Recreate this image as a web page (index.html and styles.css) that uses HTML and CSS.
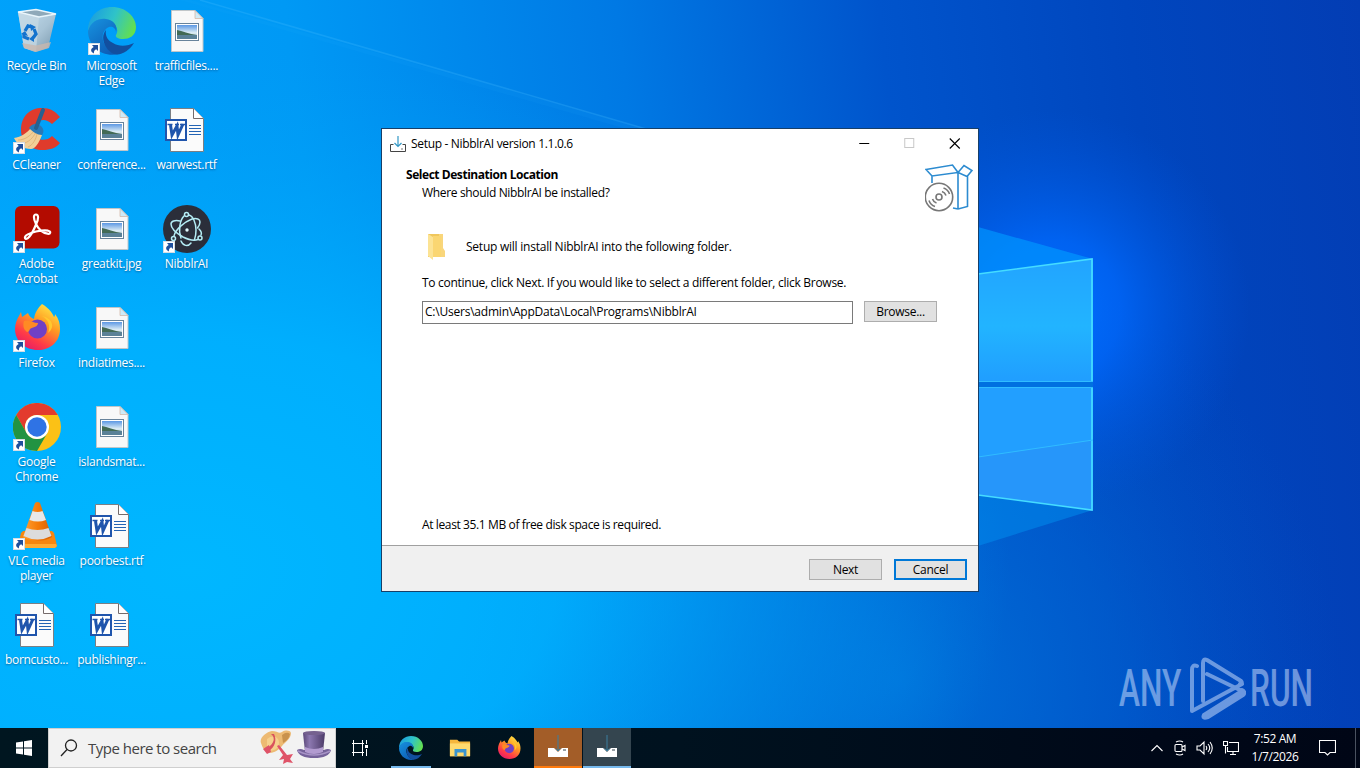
FILE: index.html
```
<!DOCTYPE html>
<html lang="en">
<head>
  <meta charset="utf-8">
  <title>Desktop</title>
  <link rel="stylesheet" href="styles.css">
</head>
<body>
  <!-- Shared icons -->
  <svg class="defs" aria-hidden="true">
    <defs>
      <linearGradient id="edgeTop" x1="0" y1="0.3" x2="1" y2="0.6"><stop offset="0" stop-color="#1a9de0"/><stop offset=".5" stop-color="#2fc3c8"/><stop offset="1" stop-color="#65e04c"/></linearGradient>
      <linearGradient id="edgeLeft" x1="0" y1="0" x2=".7" y2="1"><stop offset="0" stop-color="#1793e0"/><stop offset="1" stop-color="#0d5cb5"/></linearGradient>
      <linearGradient id="sky" x1="0" y1="0" x2="0" y2="1"><stop offset="0" stop-color="#5c98e4"/><stop offset=".55" stop-color="#dcecf4"/><stop offset="1" stop-color="#a9c4d0"/></linearGradient>
      <linearGradient id="fox" x1=".85" y1="0" x2=".25" y2="1"><stop offset="0" stop-color="#fff04a"/><stop offset=".4" stop-color="#ff9a22"/><stop offset=".75" stop-color="#ff3b47"/><stop offset="1" stop-color="#e41a6a"/></linearGradient>
      <linearGradient id="bin" x1="0" y1="0" x2="1" y2="1"><stop offset="0" stop-color="#c5dff0"/><stop offset=".55" stop-color="#a8c3d5"/><stop offset="1" stop-color="#7695aa"/></linearGradient>
      <linearGradient id="cone" x1="0" x2="1"><stop offset="0" stop-color="#ffa033"/><stop offset=".5" stop-color="#f57c0a"/><stop offset="1" stop-color="#d85e00"/></linearGradient>
      <linearGradient id="hat" x1="0" x2="1"><stop offset="0" stop-color="#5b4979"/><stop offset=".3" stop-color="#8c78b0"/><stop offset="1" stop-color="#4c3b68"/></linearGradient>
    </defs>
    <symbol id="i-arrow" viewBox="0 0 12 12">
      <rect width="12" height="12" fill="#fff"/>
      <rect x=".5" y=".5" width="11" height="11" fill="none" stroke="#d5dde5"/>
      <path d="M4 2h6v6L8.200 6.300C6.300 7.300 5.700 8.700 6 10.500 2.200 9 2.300 5.500 5.700 4z" fill="#1f4f9c"/>
    </symbol>
    <symbol id="i-bin" viewBox="0 0 48 48">
      <path d="M5 5l6 36 11 4 13-4 8-34-17 3z" fill="url(#bin)"/>
      <path d="M5 5l21 5-3 34.500L11 41z" fill="#c5d8e3" opacity=".75"/>
      <path d="M5 5l18-2.500L43 7 26 10z" fill="#8fa9b9" stroke="#e9f5fb" stroke-width="1.300"/>
      <path d="M9 36l14 2.500L38 35l-2 6-13 4-12-4z" fill="#c9b8ae" opacity=".8"/>
      <g fill="none" stroke="#1373ce" stroke-width="3.300"><path d="M12 24l3-5 4 1"/><path d="M21 22l2 5-3 4"/><path d="M16 32l-5-2v-3"/></g>
      <path d="M17 17l6 3-5 4zM21 35l-5-3 5-4zM8 27l4-3 3 5z" fill="#1373ce"/>
    </symbol>
    <symbol id="i-edge" viewBox="0 0 48 48">
      <path d="M0 24C0 8 12 0 24 0c14 0 24 10 24 20 0 9-7 12-13 12-5 0-8-2-7-4 2-3 2-7-2-11C20 11 7 11 0 24z" fill="url(#edgeTop)"/>
      <path d="M0 24C3 14 11 11 18 12c8 1 12 7 10 13 0-4-4-6-7-5-7 3-8 12-4 18 4 6 9 9 14 9C14 51 0 39 0 24z" fill="url(#edgeLeft)"/>
      <path d="M18 23c-6 7-2 19 8 24 7 2 15-3 20-11-6 3-15 4-21 0-6-3-8-8-7-13z" fill="#124f9f"/>
    </symbol>
    <symbol id="i-image" viewBox="0 0 48 48">
      <path d="M8.500 3.500H32l8 8V44.500H8.500z" fill="#f8f8f8" stroke="#c0c6c9"/>
      <path d="M32 3.500V11.500h8z" fill="#cfeaf6" stroke="#d3b9a8" stroke-width=".8"/>
      <rect x="12.500" y="16.500" width="23" height="17" fill="#fff" stroke="#68839b"/>
      <rect x="14" y="18" width="20" height="14" fill="url(#sky)"/>
      <path d="M14 23c5 1 12 4 20 5H14z" fill="#426a55"/>
      <path d="M14 28h20v4H14z" fill="#5a8197"/>
    </symbol>
    <symbol id="i-word" viewBox="0 0 48 48">
      <path d="M7.500 2.500h23l10 10v33h-33z" fill="#fbfbfb" stroke="#7b7f84"/>
      <path d="M30.500 2.500v10h10" fill="#fff" stroke="#756b6b"/>
      <path d="M26 19.500h12M26 22.500h12M26 25.500h12M26 28.500h12" stroke="#2464b4"/>
      <rect x="3" y="14" width="20" height="20" fill="#fff" stroke="#2055ac" stroke-width="2"/>
      <path d="M7.500 19l1.500 10 5-9 1 9 5-11" fill="none" stroke="#2055ac" stroke-width="3"/>
      <path d="M4.500 18.500h5M12 18.500h4M17 18.500h5" stroke="#2055ac" stroke-width="1.500"/>
    </symbol>
    <symbol id="i-ccleaner" viewBox="0 0 48 48">
      <path d="M47 11l-8 7C31 10 21 15 21 24c0 10 11 13 18 6l8 7c-4 5-10 7-17 7-13 0-22-8-22-20C8 10 17 2 29 2c8 0 13 3 18 9z" fill="#df3b2c"/>
      <path d="M1 32c7-1 13-5 17-10l11 7c-3 8-7 14-11 14C10 43 4 38 1 32z" fill="#f2cf98"/>
      <path d="M5 34c7 0 12-4 16-9M9 38c7-2 11-6 14-12M15 41c5-2 8-8 9-13" fill="none" stroke="#e0b67a"/>
      <path d="M16 22c3-5 8-5 12-2 3 3 3 6 1 9-5 0-9-3-13-7z" fill="#2879b8"/>
      <path d="M23 22l7-18" stroke="#27618f" stroke-width="4" stroke-linecap="round"/>
    </symbol>
    <symbol id="i-acrobat" viewBox="0 0 48 48">
      <rect x="2" y="1" width="44.500" height="42.500" rx="6" fill="#b30b00"/>
      <path d="M23 19c-3-6-2.500-9.500 0-9.500s3 4 0 10c-2 5-4 9-6.500 12-2.500 3-5 3-4.500.500.500-2 5-4 11-5.500 5-1 9-1.300 12-.8 3.500.800 2.500 3.500-.500 3-4-.500-9-4-11.500-9.700z" fill="none" stroke="#fff" stroke-width="2.200"/>
    </symbol>
    <symbol id="i-electron" viewBox="0 0 48 48">
      <circle cx="24" cy="24" r="24" fill="#2b2e3a"/>
      <g fill="none" stroke="#b5edf5" stroke-width="1.500" stroke-linecap="round">
        <path d="M26 10c4 1 7 8 7 15 0 4-.500 7-1.500 9.500"/>
        <path d="M21 11c-4 4-6 14-3 22"/>
        <path d="M18 36c2 5 7 6 10 2"/>
        <path d="M11 31c1-6 10-14 18-17 5-1 8 0 8 3 0 2-1 4-2.500 6"/>
        <path d="M17 16c-5-1-9 0-9 3 0 4 5 9 12 13 6 3 11 4 15 2.500"/>
        <path d="M38 30c1-2 0-4-2-6"/>
        <circle cx="23.500" cy="9.500" r="2"/><circle cx="10.500" cy="33.500" r="2"/><circle cx="37" cy="33" r="2"/>
      </g>
      <circle cx="24" cy="25" r="1.700" fill="#dffaff"/>
    </symbol>
    <symbol id="i-firefox" viewBox="0 0 48 48">
      <path d="M29 0c8 5 11 10 12 13 1-1 1-2 1-3 4 5 5 10 5 15 0 13-10 21-22 21C12 46 2 37 2 25c0-5 2-10 4-13l2-4 1 5 6-4c1 3 3 5 6 6 1-7 4-11 8-15z" fill="url(#fox)"/>
      <circle cx="24.500" cy="25" r="9.500" fill="#7040c5"/>
      <path d="M11 17c5-2 9 2 14 2 0 4-5 4-8 6-1 3-3 4-4 2-3-2-3-7-2-10z" fill="#ff8a24"/>
      <path d="M29 12c6 3 9 10 6 17 8-6 4-15-6-17z" fill="#ffc82d"/>
    </symbol>
    <symbol id="i-chrome" viewBox="0 0 48 48">
      <circle cx="24" cy="24" r="24" fill="#fbc116"/>
      <path d="M3.200 12A24 24 0 0 1 44.800 12H24a12 12 0 0 0-10.400 18z" fill="#e33b2e"/>
      <path d="M3.200 12A24 24 0 0 0 24 48l10.400-18a12 12 0 0 1-20.800 0z" fill="#229342"/>
      <circle cx="24" cy="24" r="12" fill="#fff"/><circle cx="24" cy="24" r="9.700" fill="#2f73e5"/>
    </symbol>
    <symbol id="i-vlc" viewBox="0 0 48 48">
      <path d="M8 31l2-2h29l2 2 3 13-2 2H7l-2-2z" fill="#f6860f"/>
      <path d="M6 42h37l1 2-2 2H7l-2-2z" fill="#ffab32"/>
      <path d="M22 1q2.500-2 5 0l12 34q-14 8-29 0z" fill="url(#cone)"/>
      <path d="M19.500 9q5 2 10 0l3.500 9q-8 3-16.500 0z" fill="#e8e8e8"/>
      <path d="M13.500 26q11 4 22 0l3 8q-14 7-28 0z" fill="#dcdcdc"/>
    </symbol>
    <symbol id="i-setup" viewBox="0 0 24 24">
      <path d="M2 13h6l4 4 4-4h6v9H2z" fill="#fff"/><path d="M17 15h3" stroke="#30404a"/>
      <path d="M12 0v16M9.500 13.500L12 16l2.500-2.500" fill="none" stroke="#3b7f9f"/>
    </symbol>
  </svg>

  <div class="desktop">
    <svg class="wallpaper" viewBox="0 0 1360 768" aria-hidden="true">
      <defs>
        <linearGradient id="base" x1="0" y1="160" x2="1360" y2="0" gradientUnits="userSpaceOnUse">
          <stop offset="0" stop-color="#00a2fb"/><stop offset=".22" stop-color="#0099f5"/><stop offset=".46" stop-color="#0079e4"/><stop offset=".65" stop-color="#0054cc"/><stop offset=".83" stop-color="#0046be"/><stop offset="1" stop-color="#033db4"/>
        </linearGradient>
        <radialGradient id="cyan" cx="190" cy="570" r="1" gradientUnits="userSpaceOnUse" gradientTransform="translate(190 570) scale(820 520) translate(-190 -570)">
          <stop offset="0" stop-color="#00b7ff"/><stop offset=".45" stop-color="#00b2ff" stop-opacity=".85"/><stop offset="1" stop-color="#00a0f5" stop-opacity="0"/>
        </radialGradient>
        <radialGradient id="glow" cx="1050" cy="310" r="200" gradientUnits="userSpaceOnUse">
          <stop offset="0" stop-color="#006fff"/><stop offset=".35" stop-color="#0068fc" stop-opacity=".8"/><stop offset="1" stop-color="#0055dd" stop-opacity="0"/>
        </radialGradient>
        <radialGradient id="low" cx="900" cy="680" r="440" gradientUnits="userSpaceOnUse">
          <stop offset="0" stop-color="#0078dc" stop-opacity=".75"/><stop offset=".5" stop-color="#0066d2" stop-opacity=".5"/><stop offset="1" stop-color="#0553c4" stop-opacity="0"/>
        </radialGradient>
        <linearGradient id="pane" x1="0" y1="0" x2="0" y2="1"><stop offset="0" stop-color="#22a4ff"/><stop offset=".55" stop-color="#22b4ff"/><stop offset="1" stop-color="#209eff"/></linearGradient>
      </defs>
      <rect width="1360" height="768" fill="url(#base)"/>
      <rect width="1360" height="768" fill="url(#low)"/>
      <rect width="1360" height="768" fill="url(#cyan)"/>
      <rect width="1360" height="768" fill="url(#glow)"/>
      <path d="M190 0l470 133H640L180 0z" fill="#22b6ff" opacity=".08"/>
      <path d="M200 0l460 133" stroke="#49bfff" stroke-width="1.500" opacity=".25"/>
      <path d="M978 227l115 32-115 15z" fill="#0099ff" opacity=".65"/>
      <path d="M978 495l115 15-115 36z" fill="#0090f0" opacity=".5"/>
      <path d="M978 382h115v5H978z" fill="#0070e0"/>
      <path d="M978 274l115-15v122H978z" fill="url(#pane)"/>
      <path d="M978 387h115v123l-115-15z" fill="#229fff"/>
      <path d="M978 457l115-17v70l-115-15z" fill="#2696fa"/>
      <path d="M978 274l114-15v122M1092 387v123l-114-15" fill="none" stroke="#45dcff" stroke-width="1.700"/>
      <path d="M978 457l115-17M978 381.500h115M978 387.500h115" fill="none" stroke="#30bcff"/>
    </svg>

    <div class="icons">
      <div class="icon-col">
        <div class="icon"><svg class="pic"><use href="#i-bin"/></svg><span>Recycle Bin</span></div>
        <div class="icon"><svg class="pic"><use href="#i-ccleaner"/><use href="#i-arrow" y="36" width="12" height="12"/></svg><span>CCleaner</span></div>
        <div class="icon"><svg class="pic"><use href="#i-acrobat"/><use href="#i-arrow" y="36" width="12" height="12"/></svg><span>Adobe<br>Acrobat</span></div>
        <div class="icon"><svg class="pic"><use href="#i-firefox"/><use href="#i-arrow" y="36" width="12" height="12"/></svg><span>Firefox</span></div>
        <div class="icon"><svg class="pic"><use href="#i-chrome"/><use href="#i-arrow" y="36" width="12" height="12"/></svg><span>Google<br>Chrome</span></div>
        <div class="icon"><svg class="pic"><use href="#i-vlc"/><use href="#i-arrow" y="36" width="12" height="12"/></svg><span>VLC media<br>player</span></div>
        <div class="icon"><svg class="pic"><use href="#i-word"/></svg><span>borncusto...</span></div>
      </div>
      <div class="icon-col">
        <div class="icon"><svg class="pic"><use href="#i-edge"/><use href="#i-arrow" y="36" width="12" height="12"/></svg><span>Microsoft<br>Edge</span></div>
        <div class="icon"><svg class="pic"><use href="#i-image"/></svg><span>conference...</span></div>
        <div class="icon"><svg class="pic"><use href="#i-image"/></svg><span>greatkit.jpg</span></div>
        <div class="icon"><svg class="pic"><use href="#i-image"/></svg><span>indiatimes....</span></div>
        <div class="icon"><svg class="pic"><use href="#i-image"/></svg><span>islandsmat...</span></div>
        <div class="icon"><svg class="pic"><use href="#i-word"/></svg><span>poorbest.rtf</span></div>
        <div class="icon"><svg class="pic"><use href="#i-word"/></svg><span>publishingr...</span></div>
      </div>
      <div class="icon-col">
        <div class="icon"><svg class="pic"><use href="#i-image"/></svg><span>trafficfiles....</span></div>
        <div class="icon"><svg class="pic"><use href="#i-word"/></svg><span>warwest.rtf</span></div>
        <div class="icon"><svg class="pic"><use href="#i-electron"/><use href="#i-arrow" y="36" width="12" height="12"/></svg><span>NibblrAI</span></div>
      </div>
    </div>

    <div class="window">
      <div class="titlebar">
        <svg class="title-icon" viewBox="0 0 16 16"><path d="M3.500 8.500h-3v7h15v-7h-3" fill="none" stroke="#444"/><path d="M8 0v10M4.500 7L8 10.500 11.500 7" fill="none" stroke="#3398c6" stroke-width="1.200"/><path d="M11 13h2" stroke="#777"/></svg>
        <span class="title">Setup - NibblrAI version 1.1.0.6</span>
        <svg class="win-btn" viewBox="0 0 45 29"><path d="M17 14.500h10" stroke="#000"/></svg>
        <svg class="win-btn" viewBox="0 0 45 29"><rect x="17.500" y="9.500" width="9" height="9" fill="none" stroke="#c8c8c8"/></svg>
        <svg class="win-btn" viewBox="0 0 45 29"><path d="M17.500 9.500l10 10M27.500 9.500l-10 10" stroke="#000" stroke-width="1.100"/></svg>
      </div>
      <div class="page-head">
        <div>
          <h1>Select Destination Location</h1>
          <p>Where should NibblrAI be installed?</p>
        </div>
        <svg class="box-icon" viewBox="0 0 48 49" fill="none" stroke="#2c8bd0" stroke-width="1.600">
          <path d="M1 5.500L27.500 1l5.500 7.500L7 12zM33 8.500l6-7 8 5-5 6zM33 8.500V45M33 45l9.500-2.500V12M7 12v7M28 44l5 1"/>
          <g stroke="#777"><circle cx="14" cy="33" r="13.700" fill="#fff"/><circle cx="14" cy="33" r="3"/><path d="M17 27.500q3 1 4 4M18.500 24q4.500 1.500 6 6M11.500 39q-3-1-4-4M10 42.500Q5.500 41 4 36.500"/></g>
        </svg>
      </div>
      <div class="page-body">
        <div class="dest">
          <svg class="folder" viewBox="0 0 32 32"><path d="M6 3h14v23H6z" fill="#f0c75c"/><path d="M17 3h4v14l2 3v6h-6z" fill="#f9d67c"/><path d="M6 3l5 3v23l-5-4z" fill="#fce394"/><path d="M11 5h8v21h-8z" fill="#fad672"/></svg>
          <span>Setup will install NibblrAI into the following folder.</span>
        </div>
        <p class="hint">To continue, click Next. If you would like to select a different folder, click Browse.</p>
        <div class="path-row">
          <div class="path">C:\Users\admin\AppData\Local\Programs\NibblrAI</div>
          <button class="button">Browse...</button>
        </div>
        <p class="space">At least 35.1 MB of free disk space is required.</p>
      </div>
      <div class="footer">
        <button class="button">Next</button>
        <button class="button button-focus">Cancel</button>
      </div>
    </div>

    <div class="watermark">
      <span class="mark-word">ANY</span>
      <svg class="mark-logo" viewBox="0 0 56 64">
        <path d="M7 9Q2 7 2 13V54l50-27M13 44V6q0-5 4-3l34 21q2 2-1 3"/>
        <path d="M17 17l35 17-38 24q-2 4 4 2l35-22q3-3-1-5"/>
      </svg>
      <span class="mark-word">RUN</span>
    </div>
  </div>

  <div class="taskbar">
    <div class="task"><svg viewBox="0 0 16 16" width="16" height="16" fill="#fff"><path d="M0 2.500l7-1v6H0zM8 1.300L16 0v7.500H8zM0 8.500h7v6l-7-1zM8 8.500h8V16l-8-1.300z"/></svg></div>
    <div class="search">
      <svg class="lens" viewBox="0 0 18 18" fill="none" stroke="#222" stroke-width="1.300"><circle cx="11" cy="6.500" r="5.500"/><path d="M7 10.500L1 17"/></svg>
      <span>Type here to search</span>
      <svg class="hats" viewBox="0 0 72 36">
        <path d="M1 13C-1 8 6 2 12 1c5 0 7 3 10 1 3-2 8-2 9 1 0 6-6 9-9 13-5 6-12 9-16 5-3-2-4-5-5-8z" fill="#edba73"/>
        <path d="M7 9c6-5 12-2 12 4 0 6-6 9-12 7z" fill="#f6d08d"/>
        <path d="M22 5q5-4 8-1-1 6-7 9z" fill="#c9924d"/>
        <path d="M11 4c5 4 3 10-4 14l2 3c6-4 8-11 5-17z" fill="#d9525d"/>
        <path d="M3 19l6-4 2 7-4 2zM17 16l2-1 8 10 6-1-3 5 3 4-6-1-4 2 1-5-5 1 4-5z" fill="#df5368"/>
        <path d="M37 20q3-2 7 0h20q4-2 7 0-2 8-17 8T37 20z" fill="#75629a"/><path d="M38 21q8 4 16 4t16-4" fill="none" stroke="#a793c6" stroke-width="1.500"/>
        <path d="M43 3q11-3 22 0l-2 19q-9 4-18 0z" fill="url(#hat)"/><path d="M45 17q9 4 18 0v5q-9 4-18 0z" fill="#b29bd0"/><ellipse cx="54" cy="3" rx="11" ry="2" fill="#75618f"/>
      </svg>
    </div>
    <div class="task task-view"><svg viewBox="0 0 17 16" width="17" height="16" fill="none" stroke="#fff"><path d="M1.500 0v3.500h9V0M1.500 16v-3.500h9V16M0 3.500h12M0 12.500h12M1.500 3.500v9M10.500 3.500v9M14.500 0v4M14.500 9v7"/><path d="M13 5h3v3h-3z" fill="#fff" stroke="none"/></svg></div>
    <div class="task task-open"><svg width="24" height="24"><use href="#i-edge"/></svg></div>
    <div class="task"><svg viewBox="0 0 24 20" width="22" height="20"><path d="M1 1h8l2 2h12v16H1z" fill="#f6b73c"/><path d="M1 5h22v14H1z" fill="#ffda6e"/><path d="M6 11h13v8h-3v-4h-7v4H6z" fill="#3a94cf"/></svg></div>
    <div class="task"><svg width="24" height="24"><use href="#i-firefox"/></svg></div>
    <div class="task task-alert"><svg class="setup" width="24" height="24"><use href="#i-setup"/></svg></div>
    <div class="task task-active"><svg class="setup" width="24" height="24"><use href="#i-setup"/></svg></div>
    <div class="tray">
      <svg viewBox="0 0 14 8" width="14" height="8"><path d="M1.500 7L7 1.500 12.500 7"/></svg>
      <svg viewBox="0 0 12 16" width="12" height="16"><rect x="1" y="4.500" width="7" height="7" rx="1"/><path d="M8 7l3-1.500v5L8 9M2 2q4-2 7 0M2 14q4 2 7 0"/></svg>
      <svg viewBox="0 0 17 16" width="17" height="16"><path d="M1 6h3l4-4v12l-4-4H1zM10 6q1.500 2 0 4M12 4q3.500 4 0 8M14 2q4.500 6 0 12"/></svg>
      <svg viewBox="0 0 16 14" width="16" height="14"><path d="M6 1.500h9.500v9H4.500V6M7 13.500h6M10 10.500v3M.5.500h4v4h-4zM2.500 4.500v8"/></svg>
      <div class="clock">7:52 AM<br>1/7/2026</div>
      <svg class="notice" viewBox="0 0 17 16" width="17" height="16"><path d="M.5.500h16v12H11L8.500 15 6 12.500H.5z"/></svg>
    </div>
  </div>
</body>
</html>
```

FILE: styles.css
```
* {
  box-sizing: border-box;
  margin: 0;
  padding: 0;
}

body {
  width: 1360px;
  height: 768px;
  overflow: hidden;
  display: flex;
  flex-direction: column;
  font-family: 'Open Sans', 'Noto Sans', sans-serif;
  font-size: 12px;
  line-height: 15px;
  letter-spacing: -0.28px;
  color: #000;
}

.defs {
  position: absolute;
  width: 0;
  height: 0;
}

.desktop {
  position: relative;
  flex: 1;
}

.wallpaper {
  position: absolute;
  top: 0;
  left: 0;
  width: 1360px;
  height: 768px;
}

/* Desktop icons */
.icons {
  position: relative;
  display: flex;
  margin-left: -1px;
  padding-top: 7px;
}

.icon-col {
  width: 75px;
}

.icon {
  height: 99px;
  display: flex;
  flex-direction: column;
  align-items: center;
  gap: 3px;
  color: #fff;
  text-align: center;
  white-space: nowrap;
  text-shadow: 0 1px 2px rgba(0, 50, 100, 0.6);
}

.pic {
  width: 48px;
  height: 48px;
  flex: none;
}

/* Setup window */
.window {
  position: absolute;
  left: 381px;
  top: 128px;
  width: 598px;
  height: 464px;
  display: flex;
  flex-direction: column;
  background: #fff;
  border: 1px solid #173f68;
}

.titlebar {
  height: 29px;
  display: flex;
  align-items: center;
  padding-left: 8px;
}

.title-icon {
  width: 16px;
  height: 16px;
  margin-right: 5px;
}

.title {
  flex: 1;
  letter-spacing: -0.32px;
}

.win-btn {
  width: 45.5px;
  height: 29px;
}

.win-btn:last-child {
  margin: 0 1px 0 -1px;
}

.page-head {
  height: 58px;
  display: flex;
  justify-content: space-between;
  padding: 6px 5px 0 24px;
}

.page-head h1 {
  margin-top: 3px;
  font-size: 12px;
  font-weight: 700;
  letter-spacing: -0.45px;
}

.page-head p {
  margin: 3px 0 0 16px;
  letter-spacing: -0.34px;
}

.box-icon {
  width: 48px;
  height: 49px;
}

.page-body {
  flex: 1;
  display: flex;
  flex-direction: column;
  padding: 15px 40px 13px;
}

.dest {
  height: 31px;
  display: flex;
  align-items: center;
  letter-spacing: -0.24px;
}

.folder {
  width: 32px;
  height: 32px;
  margin-right: 12px;
}

.hint {
  margin-top: 13px;
}

.path-row {
  display: flex;
  gap: 11px;
  margin-top: 11px;
}

.path {
  width: 431px;
  height: 23px;
  padding: 2px 2px;
  border: 1px solid #7a7a7a;
  letter-spacing: -0.22px;
}

.button {
  width: 73px;
  height: 21px;
  border: 1px solid #adadad;
  background: #e1e1e1;
  font: inherit;
  letter-spacing: inherit;
  color: #000;
}

.button-focus {
  border: 2px solid #0078d7;
}

.space {
  margin-top: auto;
  letter-spacing: -0.38px;
}

.footer {
  height: 46px;
  display: flex;
  justify-content: flex-end;
  gap: 12px;
  padding: 13px 11px 0;
  border-top: 1px solid #a0a0a0;
  background: #f0f0f0;
}

/* Watermark */
.watermark {
  position: absolute;
  left: 1119px;
  top: 657px;
  height: 64px;
  display: flex;
  align-items: center;
  color: #d5e4ff;
  opacity: 0.5;
}

.mark-word {
  width: 66px;
  font-family: Roboto, sans-serif;
  font-size: 51px;
  font-weight: 500;
  line-height: 64px;
  letter-spacing: 0;
  transform: scaleX(0.62);
  transform-origin: left center;
}

.mark-logo {
  width: 56px;
  height: 64px;
  margin: 0 4px 0 5px;
  fill: none;
  stroke: #d5e4ff;
  stroke-width: 4;
  stroke-linejoin: round;
  stroke-linecap: round;
}

/* Taskbar */
.taskbar {
  position: relative;
  height: 40px;
  display: flex;
  background: linear-gradient(90deg, #001620, #00121f 50%, #000818 85%, #000616);
  color: #fff;
}

.task {
  width: 48px;
  margin-right: 1px;
  display: flex;
  align-items: center;
  justify-content: center;
}

.task:first-child {
  margin: 0;
}

.task-view {
  margin-right: 3px;
}

.task-open {
  background: linear-gradient(#76b9ed, #76b9ed) center bottom / 40px 2px no-repeat;
}

.task-alert {
  background: #a35d28;
  border-bottom: 2px solid #ff7a0c;
}

.task-active {
  background: #34454f;
  border-bottom: 2px solid #76b9ed;
}

.search {
  width: 288px;
  display: flex;
  align-items: center;
  padding: 0 3px 0 11px;
  background: #f2f2f2;
  border: 1px solid #cfcfcf;
  font-size: 15px;
  letter-spacing: -0.5px;
  color: #444;
}

.lens {
  width: 18px;
  height: 18px;
  margin-right: 10px;
}

.hats {
  width: 72px;
  height: 36px;
  margin-left: auto;
}

.tray {
  margin-left: auto;
  display: flex;
  align-items: center;
  gap: 10px;
  padding-right: 24px;
}

.tray svg {
  fill: none;
  stroke: #fff;
  stroke-width: 1.1;
}

.clock {
  width: 48px;
  margin-left: 2px;
  line-height: 18px;
  text-align: center;
  letter-spacing: -0.4px;
}

.tray .notice {
  margin-left: 10px;
}

/* thin edge of the show desktop button */
.taskbar::after {
  content: '';
  position: absolute;
  right: 4px;
  top: 0;
  width: 1px;
  height: 40px;
  background: #4a5260;
}
```
